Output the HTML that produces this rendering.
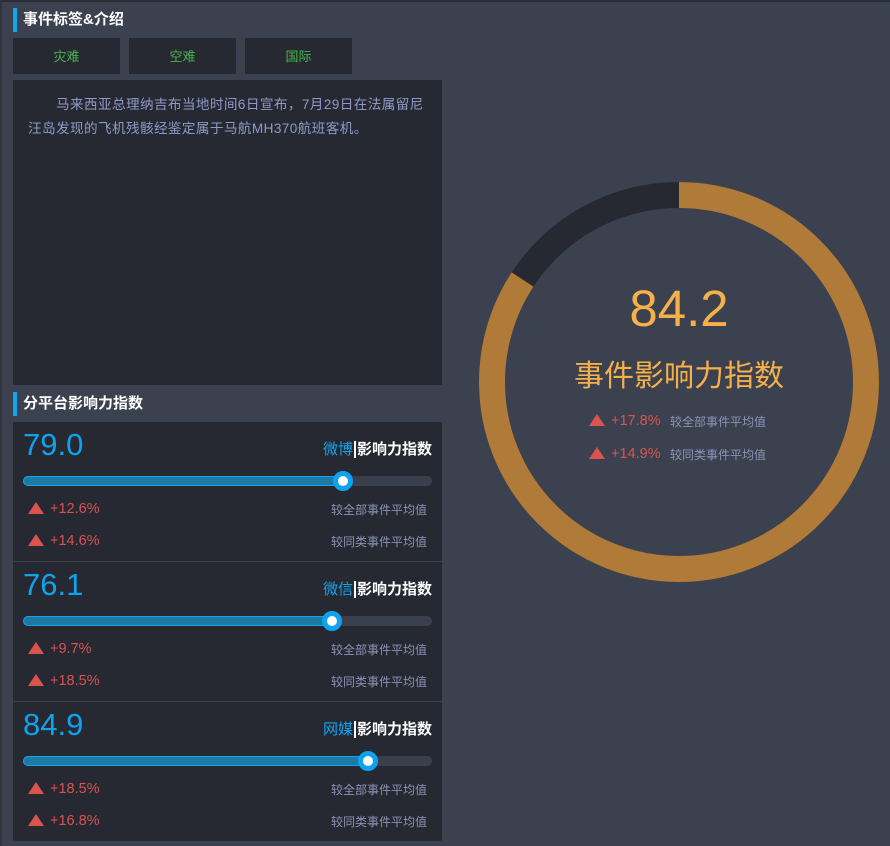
<!DOCTYPE html>
<html><head><meta charset="utf-8"><style>
*{margin:0;padding:0;box-sizing:border-box}
body{width:890px;height:846px;background:#3c4150;position:relative;overflow:hidden;font-family:"Liberation Sans","Noto Sans CJK SC",sans-serif}
.a{position:absolute}
.top{left:0;top:0;width:890px;height:2px;background:#2a2d36}
.lb{left:0;top:0;width:2px;height:846px;background:#2f333e}
.tt{color:#fff;font-size:15px;font-weight:bold;height:24px;line-height:24px;padding-left:6px;border-left:4px solid #10a5ef}
.tag{top:38px;width:107px;height:36px;background:#262932;color:#46b54a;font-size:13px;text-align:center;line-height:38px}
.desc{left:13px;top:80px;width:429px;height:305px;background:#262932;color:#8e9ac6;font-size:13.6px;line-height:24px;padding:13px 0 0 15px;white-space:nowrap;letter-spacing:0.4px}
.card{left:13px;width:429px;height:140px;background:#262932}
.num{left:10px;top:5px;font-size:31px;color:#0ea3ee}
.lab{right:10px;top:16px;font-size:15px;color:#fff;font-weight:bold}
.lab span{color:#10a5ef;font-weight:normal}
.lab i{font-style:normal;border-left:2px solid #fff;margin:0 1px}
.trk{left:10px;top:54px;width:409px;height:10px;border-radius:5px;background:#3a3f4e}
.fill{left:10px;top:54px;height:10px;border-radius:5px;background:#1e7aa5;border:1px solid #10a5ef}
.knob{top:49px;width:20px;height:20px;border-radius:50%;background:#fff;border:5px solid #0ea3ee}
.tri{width:0;height:0;border-left:8px solid transparent;border-right:8px solid transparent;border-bottom:12px solid #d9534f}
.pct{font-size:14.5px;color:#d9534f}
.cmp{font-size:12px;color:#8a93b5}
</style></head><body>
<div class="a top"></div><div class="a lb"></div>
<div class="a tt" style="left:13px;top:8px">事件标签&amp;介绍</div>
<div class="a tag" style="left:13px">灾难</div>
<div class="a tag" style="left:129px">空难</div>
<div class="a tag" style="left:245px">国际</div>
<div class="a desc">&#12288;&#12288;马来西亚总理纳吉布当地时间6日宣布，7月29日在法属留尼<br>汪岛发现的飞机残骸经鉴定属于马航MH370航班客机。</div>
<div class="a tt" style="left:13px;top:392px">分平台影响力指数</div>

<div class="a card" style="top:422px">
<div class="a num">79.0</div><div class="a lab"><span>微博</span><i></i>影响力指数</div>
<div class="a trk"></div><div class="a fill" style="width:322px"></div><div class="a knob" style="left:320px"></div>
<div class="a tri" style="left:15px;top:80px"></div><div class="a pct" style="left:37px;top:79px">+12.6%</div><div class="a cmp" style="right:15px;top:79px">较全部事件平均值</div>
<div class="a tri" style="left:15px;top:112px"></div><div class="a pct" style="left:37px;top:111px">+14.6%</div><div class="a cmp" style="right:15px;top:111px">较同类事件平均值</div>
</div>
<div class="a" style="left:13px;top:561px;width:429px;height:1px;background:#3a3f4e"></div>
<div class="a card" style="top:562px">
<div class="a num">76.1</div><div class="a lab"><span>微信</span><i></i>影响力指数</div>
<div class="a trk"></div><div class="a fill" style="width:311px"></div><div class="a knob" style="left:309px"></div>
<div class="a tri" style="left:15px;top:80px"></div><div class="a pct" style="left:37px;top:79px">+9.7%</div><div class="a cmp" style="right:15px;top:79px">较全部事件平均值</div>
<div class="a tri" style="left:15px;top:112px"></div><div class="a pct" style="left:37px;top:111px">+18.5%</div><div class="a cmp" style="right:15px;top:111px">较同类事件平均值</div>
</div>
<div class="a" style="left:13px;top:701px;width:429px;height:1px;background:#3a3f4e"></div>
<div class="a card" style="top:702px;height:139px">
<div class="a num">84.9</div><div class="a lab"><span>网媒</span><i></i>影响力指数</div>
<div class="a trk"></div><div class="a fill" style="width:347px"></div><div class="a knob" style="left:345px"></div>
<div class="a tri" style="left:15px;top:80px"></div><div class="a pct" style="left:37px;top:79px">+18.5%</div><div class="a cmp" style="right:15px;top:79px">较全部事件平均值</div>
<div class="a tri" style="left:15px;top:112px"></div><div class="a pct" style="left:37px;top:111px">+16.8%</div><div class="a cmp" style="right:15px;top:111px">较同类事件平均值</div>
</div>

<svg class="a" style="left:479px;top:182px" width="400" height="400">
<circle cx="200" cy="200" r="187" fill="none" stroke="#262932" stroke-width="26"/>
<circle cx="200" cy="200" r="187" fill="none" stroke="#b07a38" stroke-width="26" stroke-dasharray="989.3 1175" transform="rotate(-90 200 200)"/>
</svg>
<div class="a" style="left:579px;top:279px;width:200px;text-align:center;font-size:51px;color:#f6b04a">84.2</div>
<div class="a" style="left:529px;top:351px;width:300px;text-align:center;font-size:30px;color:#f6b04a">事件影响力指数</div>
<div class="a tri" style="left:589px;top:414px"></div><div class="a pct" style="left:611px;top:413px">+17.8%</div><div class="a cmp" style="left:670px;top:413px">较全部事件平均值</div>
<div class="a tri" style="left:589px;top:447px"></div><div class="a pct" style="left:611px;top:446px">+14.9%</div><div class="a cmp" style="left:670px;top:446px">较同类事件平均值</div>
</body></html>
